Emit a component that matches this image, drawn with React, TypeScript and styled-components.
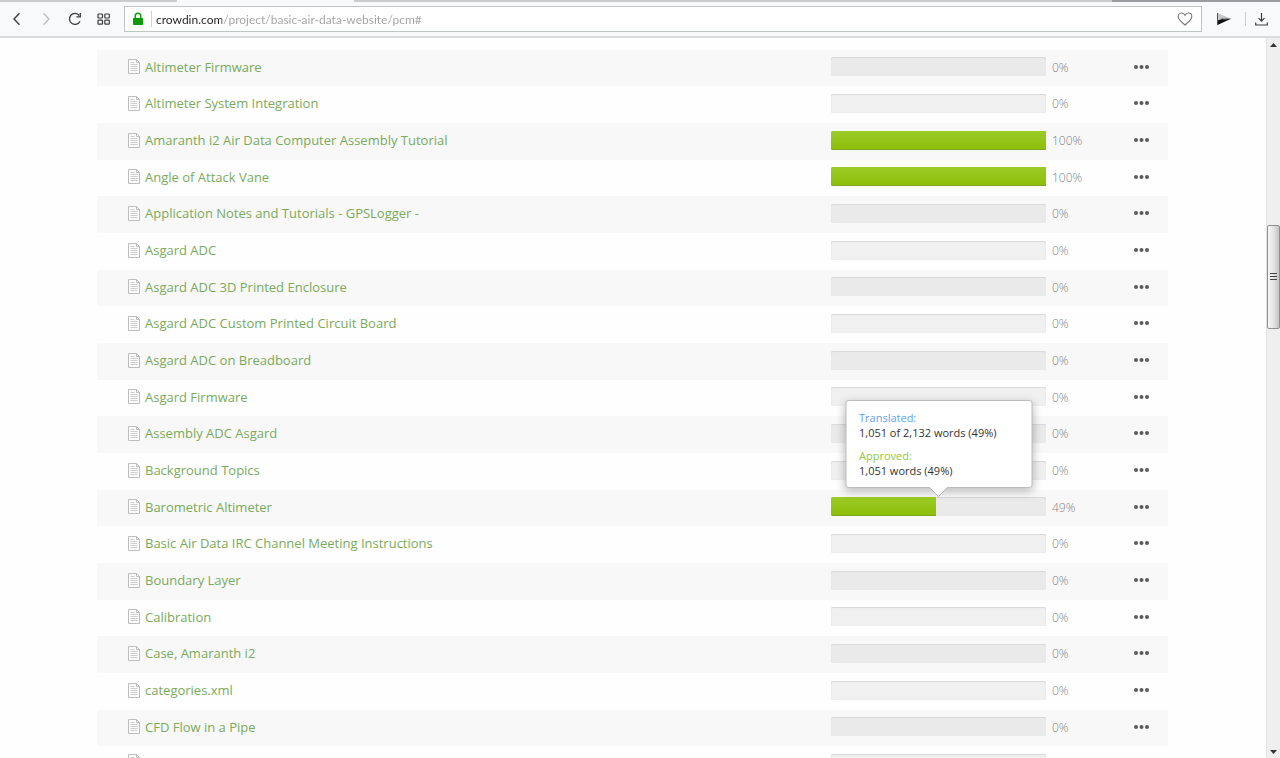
import React from "react";
import styled, { createGlobalStyle } from "styled-components";

const GlobalStyle = createGlobalStyle`
  * { box-sizing: border-box; }
  html, body, #root { height: 100%; }
  body {
    margin: 0;
    overflow: hidden;
    background: #fefefe;
    font-family: "Open Sans", "Noto Sans", sans-serif;
  }
`;

const Window = styled.div`
  display: flex;
  flex-direction: column;
  height: 100%;
`;

const TabStrip = styled.div`
  display: flex;
  flex: none;
  height: 2px;
  background: #c9cbcd;
`;

const ActiveTab = styled.div`
  width: 177px;
  margin-left: 177px;
  background: #f8f9fb;
`;

const TabEnd = styled.div`
  width: 168px;
  margin-left: auto;
  background: #9a9c9f;
`;

const Toolbar = styled.header`
  display: flex;
  align-items: center;
  flex: none;
  height: 36px;
  padding: 0 4px 0 2px;
  background: #f8f9fb;
  border-bottom: 2px solid #dadcdd;
`;

const ToolButton = styled.button`
  display: flex;
  align-items: center;
  justify-content: center;
  flex: none;
  width: 29px;
  height: 28px;
  padding: 0;
  border: 0;
  background: none;
  color: #3c3c3c;

  &:disabled { color: #bbbdbf; }
`;

const AddressBar = styled.form`
  display: flex;
  align-items: center;
  flex: 1;
  height: 26px;
  margin: 0 7px 0 6px;
  padding: 0 2px 0 7px;
  background: #fff;
  border: 1px solid #bfc4c4;
`;

const AddressDivider = styled.span`
  width: 1px;
  height: 16px;
  margin: 0 4px 0 7px;
  background: #d0d0d0;
`;

const AddressInput = styled.input`
  flex: 1;
  min-width: 0;
  height: 22px;
  padding: 0;
  border: 0;
  outline: 0;
  font: 12px/20px Lato, "Noto Sans", sans-serif;
  color: transparent;
  background: linear-gradient(90deg, #222 0 66px, #a0a0a0 66px);
  background-clip: text;
  -webkit-background-clip: text;
`;

const ToolDivider = styled.span`
  width: 1px;
  height: 14px;
  margin: 0 1px 0 7px;
  background: #c8cacc;
`;

const Viewport = styled.div`
  display: flex;
  flex: 1;
  min-height: 0;
`;

const Page = styled.main`
  flex: 1;
  min-width: 0;
  overflow: hidden;
  padding: 12px 98px 0 97px;
`;

const FileTable = styled.table`
  width: 100%;
  table-layout: fixed;
  border-collapse: collapse;
`;

const FileRow = styled.tr`
  height: 37px;

  &:nth-child(3n + 1) { height: 36px; }
  &:nth-child(odd) { background: #f8f8f8; }
`;

const Cell = styled.td`
  padding: 0 0 3px;
  vertical-align: middle;
`;

const NameCell = styled(Cell)`
  padding-left: 31px;
`;

const PercentCell = styled(Cell)`
  padding: 0 0 1px 6px;
  font-size: 12px;
  line-height: 18px;
  font-weight: 300;
  color: #808080;
`;

const NameBox = styled.div`
  display: flex;
  align-items: center;
  gap: 5px;
`;

const FileLink = styled.a`
  font-size: 13px;
  line-height: 18px;
  color: #7aaa5c;
  text-decoration: none;
  white-space: nowrap;
`;

const Track = styled.div<{ $striped: boolean }>`
  position: relative;
  height: 19px;
  border-radius: 2px;
  background: ${(p) => (p.$striped ? "#eaeaea" : "#f0f0f0")};
  box-shadow: inset 0 1px 1px #d9d9d9, inset 0 0 1px #dcdcdc;
`;

const Fill = styled.div`
  height: 100%;
  border-radius: 2px 0 0 2px;
  background: linear-gradient(#9bcb27, #8cbe08);
  box-shadow: inset 0 -1px 0 #7fa524;
`;

const MoreButton = styled.button`
  display: flex;
  padding: 6px 0;
  border: 0;
  background: none;
  color: #5a5a5a;
`;

const Tooltip = styled.div`
  position: absolute;
  z-index: 1;
  bottom: 28px;
  left: 50%;
  width: 187px;
  height: 88px;
  padding: 9px 13px;
  transform: translateX(-50%);
  background: #fff;
  border: 1px solid #bdbdbd;
  border-radius: 3px;
  box-shadow: 0 3px 10px rgba(0, 0, 0, 0.28);
  font-size: 11px;
  line-height: 15px;
  color: #333;
  white-space: nowrap;
`;

const TipGroup = styled.dl<{ $color: string }>`
  margin: 0 0 8px;

  dt { color: ${(p) => p.$color}; }
  dd { margin: 0; }
`;

const TipArrow = styled.svg`
  position: absolute;
  top: 100%;
  left: 50%;
  transform: translateX(-50%);
`;

const ScrollBar = styled.div`
  display: flex;
  flex-direction: column;
  align-items: center;
  flex: none;
  width: 14px;
  background: #efefef;
  border-left: 1px solid #e2e2e2;
`;

const ScrollArrow = styled.button`
  display: flex;
  align-items: center;
  justify-content: center;
  width: 13px;
  height: 13px;
  padding: 0;
  border: 0;
  background: none;
`;

const ScrollSpace = styled.div<{ $grow: number }>`
  flex: ${(p) => p.$grow} 1 0;
`;

const ScrollThumb = styled.div`
  display: flex;
  align-items: center;
  justify-content: center;
  flex: 102 1 0;
  width: 13px;
  border: 1px solid #8f8f8f;
  border-radius: 2px;
  background: linear-gradient(90deg, #f6f6f6, #e6e6e6 45%, #c4c4c4);
`;

type FileEntry = { name: string; percent: number };

const files: FileEntry[] = [
  { name: "Altimeter Firmware", percent: 0 },
  { name: "Altimeter System Integration", percent: 0 },
  { name: "Amaranth i2 Air Data Computer Assembly Tutorial", percent: 100 },
  { name: "Angle of Attack Vane", percent: 100 },
  { name: "Application Notes and Tutorials - GPSLogger -", percent: 0 },
  { name: "Asgard ADC", percent: 0 },
  { name: "Asgard ADC 3D Printed Enclosure", percent: 0 },
  { name: "Asgard ADC Custom Printed Circuit Board", percent: 0 },
  { name: "Asgard ADC on Breadboard", percent: 0 },
  { name: "Asgard Firmware", percent: 0 },
  { name: "Assembly ADC Asgard", percent: 0 },
  { name: "Background Topics", percent: 0 },
  { name: "Barometric Altimeter", percent: 49 },
  { name: "Basic Air Data IRC Channel Meeting Instructions", percent: 0 },
  { name: "Boundary Layer", percent: 0 },
  { name: "Calibration", percent: 0 },
  { name: "Case, Amaranth i2", percent: 0 },
  { name: "categories.xml", percent: 0 },
  { name: "CFD Flow in a Pipe", percent: 0 },
];

const FileIcon = () => (
  <svg width="12" height="15" viewBox="0 0 12 15" fill="none" aria-hidden="true">
    <path d="M.5.5h8l3 3v11H.5z" fill="#fbfbfb" stroke="#bdbdbd" />
    <path d="M8.5.5v3h3" stroke="#bdbdbd" />
    <path d="M2.5 3.5h4M2.5 5.5h7M2.5 7.5h7M2.5 9.5h7M2.5 11.5h7" stroke="#cfcfcf" />
  </svg>
);

const ProgressTooltip = () => (
  <Tooltip role="tooltip">
    <TipGroup $color="#5f9fee">
      <dt>Translated:</dt>
      <dd>1,051 of 2,132 words (49%)</dd>
    </TipGroup>
    <TipGroup $color="#92c83a">
      <dt>Approved:</dt>
      <dd>1,051 words (49%)</dd>
    </TipGroup>
    <TipArrow width="20" height="10" viewBox="0 0 20 10" aria-hidden="true">
      <path d="M1 0h18l-9 9z" fill="#fff" />
      <path d="M1 .5l9 9 9-9" fill="none" stroke="#b5b5b5" />
    </TipArrow>
  </Tooltip>
);

const FileTableRow = ({ file, striped }: { file: FileEntry; striped: boolean }) => (
  <FileRow>
    <NameCell>
      <NameBox>
        <FileIcon />
        <FileLink href="#">{file.name}</FileLink>
      </NameBox>
    </NameCell>
    <Cell>
      <Track $striped={striped}>
        {file.percent > 0 && <Fill style={{ width: `${file.percent}%` }} />}
        {file.percent === 49 && <ProgressTooltip />}
      </Track>
    </Cell>
    <PercentCell>{file.percent}%</PercentCell>
    <Cell>
      <MoreButton type="button" aria-label={`Actions for ${file.name}`}>
        <svg width="16" height="4" viewBox="0 0 16 4" fill="currentColor" aria-hidden="true">
          <circle cx="2" cy="2" r="2" />
          <circle cx="7.5" cy="2" r="2" />
          <circle cx="13" cy="2" r="2" />
        </svg>
      </MoreButton>
    </Cell>
  </FileRow>
);

export default function App() {
  return (
    <Window>
      <GlobalStyle />
      <TabStrip>
        <ActiveTab />
        <TabEnd />
      </TabStrip>
      <Toolbar>
        <ToolButton type="button" aria-label="Back">
          <svg width="10" height="14" viewBox="0 0 10 14" fill="none" stroke="currentColor" strokeWidth="1.4">
            <path d="M7.500 1.200L2 7l5.500 5.800" />
          </svg>
        </ToolButton>
        <ToolButton type="button" aria-label="Forward" disabled>
          <svg width="10" height="14" viewBox="0 0 10 14" fill="none" stroke="currentColor" strokeWidth="1.3">
            <path d="M2.500 1.200L8 7l-5.500 5.800" />
          </svg>
        </ToolButton>
        <ToolButton type="button" aria-label="Reload">
          <svg width="14" height="14" viewBox="0 0 14 14" fill="none" stroke="currentColor" strokeWidth="1.3">
            <path d="M12 9.200A5.500 5.500 0 1 1 11.300 3.500" />
            <path d="M12.300 1v3.900H8.400" />
          </svg>
        </ToolButton>
        <ToolButton type="button" aria-label="Speed dial">
          <svg width="13" height="12" viewBox="0 0 13 12" fill="none" stroke="currentColor" strokeWidth="1.2">
            <rect x="1" y="1" width="4.500" height="4" rx=".8" />
            <rect x="7.800" y="1" width="4.500" height="4" rx=".8" />
            <rect x="1" y="7.200" width="4.500" height="4" rx=".8" />
            <rect x="7.800" y="7.200" width="4.500" height="4" rx=".8" />
          </svg>
        </ToolButton>
        <AddressBar>
          <svg width="12" height="14" viewBox="0 0 12 14" aria-hidden="true">
            <path d="M3.200 6.500V4a2.800 2.800 0 0 1 5.600 0v2.500" fill="none" stroke="#109c10" strokeWidth="1.500" />
            <rect x="1" y="6" width="10" height="7" rx=".8" fill="#0a9a0a" />
          </svg>
          <AddressDivider />
          <AddressInput aria-label="Address" defaultValue="crowdin.com/project/basic-air-data-website/pcm#" spellCheck={false} />
          <ToolButton type="button" aria-label="Add to bookmarks">
            <svg width="16" height="14" viewBox="0 0 16 14" fill="none" stroke="#777" strokeWidth="1.100">
              <path d="M8 13C5.500 10.800 1.200 8 1.200 4.600 1.200 2.500 2.700 1 4.600 1 6.200 1 7.400 2 8 3.300 8.600 2 9.800 1 11.400 1c1.900 0 3.400 1.500 3.400 3.600C14.800 8 10.500 10.800 8 13z" />
            </svg>
          </ToolButton>
        </AddressBar>
        <ToolButton type="button" aria-label="Send page">
          <svg width="16" height="14" viewBox="0 0 16 14">
            <path d="M1.500 1v7L15 6.800z" fill="#c6c8c8" />
            <path d="M1.500 13V8.500L6 7l9-.2z" fill="#111" />
            <path d="M5 6.500L15 6.800 8 8z" fill="#555" />
            <path d="M1.500 1v12" stroke="#555" />
          </svg>
        </ToolButton>
        <ToolDivider />
        <ToolButton type="button" aria-label="Downloads">
          <svg width="13" height="13" viewBox="0 0 13 13" fill="none" stroke="currentColor" strokeWidth="1.200">
            <path d="M6.500 0v8M3.500 5.200l3 3 3-3M.7 9.500v2.500h11.600V9.500" />
          </svg>
        </ToolButton>
      </Toolbar>
      <Viewport>
        <Page>
          <FileTable aria-label="Project files">
            <colgroup>
              <col />
              <col width="215" />
              <col width="88" />
              <col width="34" />
            </colgroup>
            <tbody>
              {files.map((file, i) => (
                <FileTableRow key={file.name} file={file} striped={i % 2 === 0} />
              ))}
              <FileRow aria-hidden="true">
                <NameCell>
                  <FileIcon />
                </NameCell>
                <Cell>
                  <Track $striped={false} />
                </Cell>
                <PercentCell />
                <Cell />
              </FileRow>
            </tbody>
          </FileTable>
        </Page>
        <ScrollBar>
          <ScrollArrow type="button" aria-label="Scroll up">
            <svg width="7" height="4" viewBox="0 0 7 4"><path d="M3.500 0L7 4H0z" fill="#333" /></svg>
          </ScrollArrow>
          <ScrollSpace $grow={174} />
          <ScrollThumb>
            <svg width="7" height="8" viewBox="0 0 7 8"><path d="M0 .5h7M0 3.500h7M0 6.500h7" stroke="#444" /></svg>
          </ScrollThumb>
          <ScrollSpace $grow={416} />
          <ScrollArrow type="button" aria-label="Scroll down">
            <svg width="7" height="4" viewBox="0 0 7 4"><path d="M0 0h7L3.500 4z" fill="#333" /></svg>
          </ScrollArrow>
        </ScrollBar>
      </Viewport>
    </Window>
  );
}
